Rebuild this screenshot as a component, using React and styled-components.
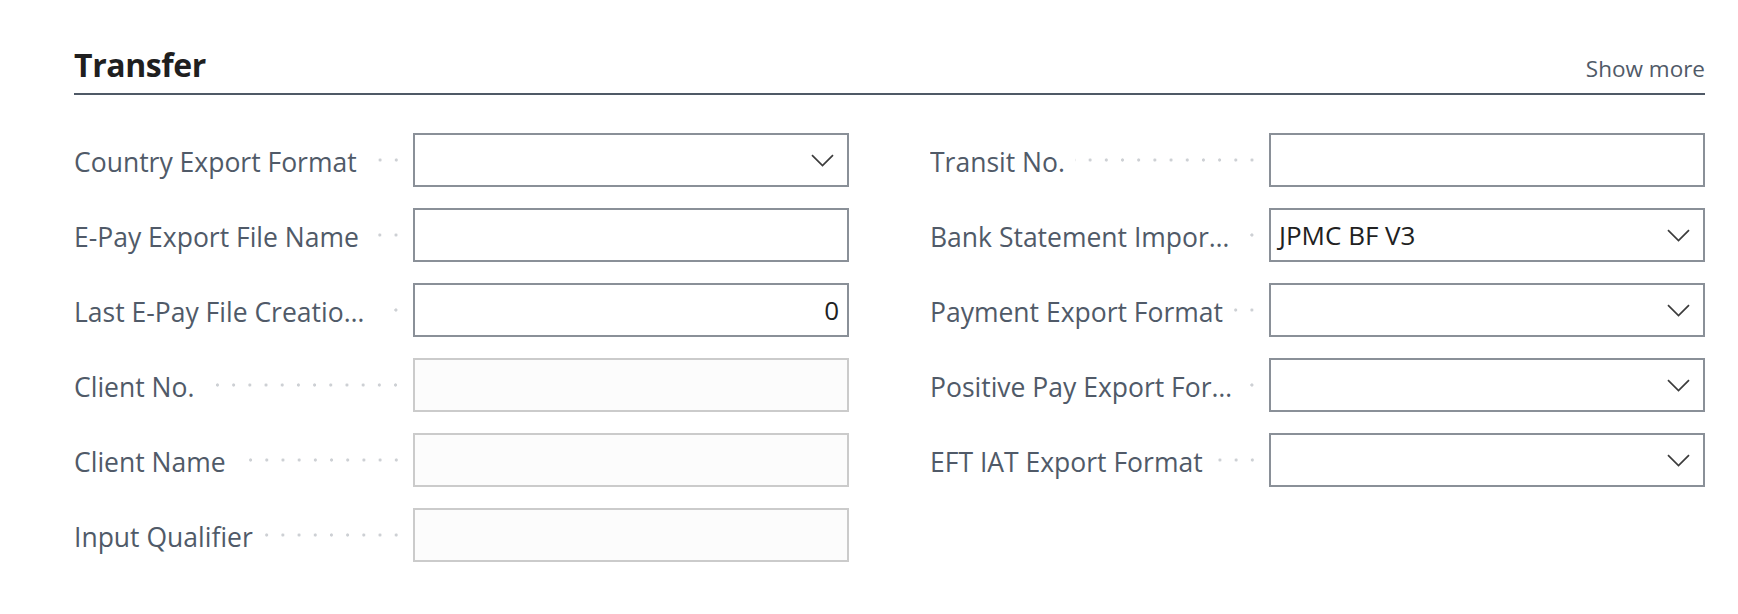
import React from 'react';
import styled, { createGlobalStyle } from 'styled-components';

const Global = createGlobalStyle`
  html, body { margin: 0; padding: 0; background: #ffffff; }
  body { font-family: "Open Sans", "Noto Sans", sans-serif; -webkit-font-smoothing: antialiased; }
`;

const Page = styled.div`
  width: 1738px;
  box-sizing: border-box;
  padding: 0 33px 40px 74px;
`;

const Header = styled.header`
  display: flex;
  align-items: baseline;
  justify-content: space-between;
  padding: 45px 0 8px;
  border-bottom: 2px solid #4f5966;
`;

const Title = styled.h2`
  margin: 0;
  font-size: 32px;
  line-height: 40px;
  font-weight: 700;
  color: #1f1f1f;
  letter-spacing: -0.4px;
`;

const ShowMore = styled.button`
  border: 0;
  background: none;
  padding: 0;
  font-family: inherit;
  font-size: 22.5px;
  line-height: 30px;
  color: #505a68;
  cursor: pointer;
`;

const Columns = styled.div`
  display: grid;
  grid-template-columns: 775px 775px;
  column-gap: 81px;
  margin-top: 38px;
`;

const Column = styled.div`
  display: flex;
  flex-direction: column;
  gap: 21px;
`;

const Row = styled.div`
  display: grid;
  grid-template-columns: 339px 1fr;
  align-items: center;
  height: 54px;
`;

const LabelCell = styled.div`
  display: flex;
  align-items: center;
  min-width: 0;
  padding: 3px 9px 0 0;
`;

const LabelText = styled.span`
  flex: 0 1 auto;
  min-width: 0;
  white-space: nowrap;
  overflow: hidden;
  text-overflow: ellipsis;
  font-size: 26.5px;
  line-height: 36px;
  color: #505a68;
`;

const Leader = styled.span`
  flex: 1 0 16px;
  margin-left: 10px;
  margin-top: -3px;
  height: 6px;
  background-image: radial-gradient(circle, #cdd0d4 1.3px, rgba(255, 255, 255, 0) 1.9px);
  background-size: 16.2px 6px;
  background-position: right center;
  background-repeat: repeat-x;
`;

const Box = styled.div`
  box-sizing: border-box;
  height: 54px;
  display: flex;
  align-items: center;
  justify-content: ${(p) => (p.$numeric ? 'flex-end' : 'flex-start')};
  padding: 0 8px;
  border: 2px solid ${(p) => (p.$disabled ? '#cbcbcb' : '#8a9098')};
  background: ${(p) => (p.$disabled ? '#fcfcfc' : '#ffffff')};
  font-size: 26px;
  color: #212121;
`;

const Value = styled.span`
  white-space: nowrap;
`;

const Chevron = styled.svg`
  margin-left: auto;
  margin-right: 5px;
  flex: none;
`;

function Field({ label, value, dropdown, numeric, disabled }) {
  return (
    <Row>
      <LabelCell>
        <LabelText title={label}>{label}</LabelText>
        <Leader />
      </LabelCell>
      <Box $numeric={numeric} $disabled={disabled}>
        {value !== undefined && <Value>{value}</Value>}
        {dropdown && (
          <Chevron width="23" height="13" viewBox="0 0 23 13" aria-hidden="true">
            <polyline points="1,1.2 11.5,11.5 22,1.2" fill="none" stroke="#3c3c3c" strokeWidth="1.7" />
          </Chevron>
        )}
      </Box>
    </Row>
  );
}

const left = [
  { label: 'Country Export Format', dropdown: true },
  { label: 'E-Pay Export File Name' },
  { label: 'Last E-Pay File Creation No.', value: '0', numeric: true },
  { label: 'Client No.', disabled: true },
  { label: 'Client Name', disabled: true },
  { label: 'Input Qualifier', disabled: true },
];

const right = [
  { label: 'Transit No.' },
  { label: 'Bank Statement Import Format', value: 'JPMC BF V3', dropdown: true },
  { label: 'Payment Export Format', dropdown: true },
  { label: 'Positive Pay Export Format', dropdown: true },
  { label: 'EFT IAT Export Format', dropdown: true },
];

export default function App() {
  return (
    <Page>
      <Global />
      <Header>
        <Title>Transfer</Title>
        <ShowMore>Show more</ShowMore>
      </Header>
      <Columns>
        <Column>
          {left.map((f) => (
            <Field key={f.label} {...f} />
          ))}
        </Column>
        <Column>
          {right.map((f) => (
            <Field key={f.label} {...f} />
          ))}
        </Column>
      </Columns>
    </Page>
  );
}
